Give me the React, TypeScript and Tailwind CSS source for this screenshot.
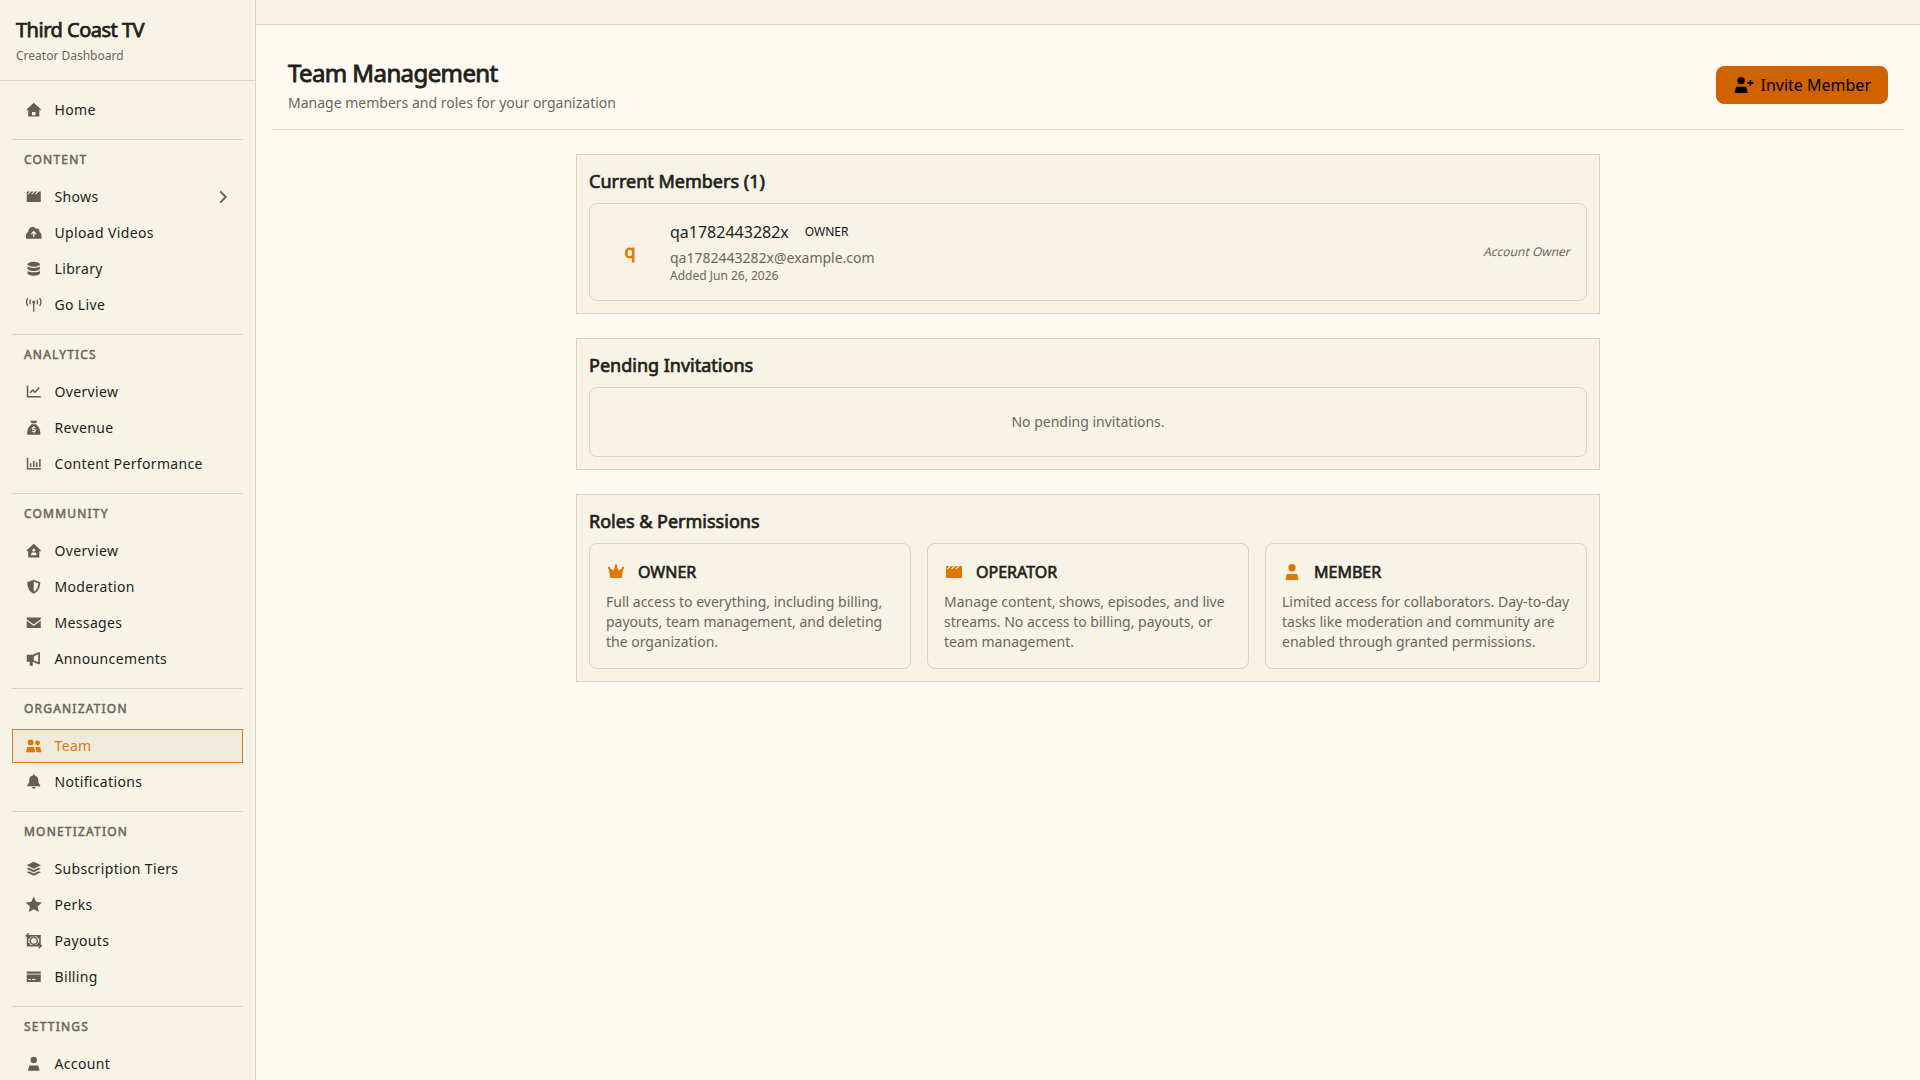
import type { ReactNode } from "react";

const ICONS: Record<string, ReactNode> = {
  home: (
    <path
      fillRule="evenodd"
      d="M9 1.8 1.5 8.7l1 1.1.8-.7V16h11.4V9.1l.8.7 1-1.1zM7.2 11.2h3.6v3.4H7.2z"
    />
  ),
  shows: (
    <path
      fillRule="evenodd"
      d="M1.8 3.6h14.4v10.8H1.8zM5 3.6h1.4L3.7 6.4H2.3zM8.9 3.6h1.4L7.6 6.4H6.2zM12.8 3.6h1.4l-2.7 2.8h-1.4z"
    />
  ),
  upload: (
    <path
      fillRule="evenodd"
      d="M1 15.2v-3.4c0-1.7 1-3.2 2.4-3.9v-.5C3.4 4.9 5.3 3 7.7 3c1.5 0 2.8.7 3.6 1.8 2.2-.4 3.9.9 3.6 3.3 1.4.7 2.1 2.1 2.1 3.7v3.4zM9 6.9 6 9.9l.9.9 1.4-1.4v3.8h1.4V9.4l1.4 1.4.9-.9z"
    />
  ),
  library: (
    <>
      <ellipse cx="9" cy="4.4" rx="6.4" ry="2.5" />
      <path d="M2.6 6.7C4 7.6 6.3 8.1 9 8.1s5-.5 6.4-1.4v2.1c0 1.4-2.9 2.5-6.4 2.5s-6.4-1.1-6.4-2.5zM2.6 11.3c1.4.9 3.7 1.4 6.4 1.4s5-.5 6.4-1.4v2.3c0 1.4-2.9 2.5-6.4 2.5s-6.4-1.1-6.4-2.5z" />
    </>
  ),
  live: (
    <>
      <circle cx="9" cy="6.2" r="1.6" />
      <path d="M8.3 6h1.4v10.2H8.3z" />
      <path
        fill="none"
        stroke="currentColor"
        strokeWidth="1.4"
        d="M3 2.1c-1.7 2.4-1.7 5.8 0 8.2M15 2.1c1.7 2.4 1.7 5.8 0 8.2M5.7 3.7c-.9 1.6-.9 3.4 0 5M12.3 3.7c.9 1.6.9 3.4 0 5"
      />
    </>
  ),
  line: (
    <path
      fill="none"
      stroke="currentColor"
      strokeWidth="1.6"
      d="M2.6 2.8v11.4h13.6M5.2 10.4l2.7-3.1 2.4 2.2 4.4-4.8"
    />
  ),
  revenue: (
    <>
      <path d="M5.3 1.7h7.4l-1.6 2.7H6.9zM6.7 5.4h4.6c2.6 2 4.4 5 4.4 8.2v2.6H2.3v-2.6c0-3.2 1.8-6.2 4.4-8.2z" />
      <path
        fill="none"
        stroke="#f7f3e6"
        strokeWidth="1.2"
        d="M10.8 9.2c-1.3-.6-3.4-.6-3.4.6 0 1.4 3.4.6 3.4 2.1 0 1.2-2.2 1.1-3.6.5M9 7.5v1.4M9 12.6v1.5"
      />
    </>
  ),
  bars: (
    <path
      fill="none"
      stroke="currentColor"
      strokeWidth="1.6"
      d="M2.6 2.8v11.4h13.6M5.8 8.4v3.9M9 5.8v6.5M12 7.4v4.9M15.3 4v8.3"
    />
  ),
  community: (
    <path
      fillRule="evenodd"
      d="M9 1.8 1.5 8.7l1 1.1.8-.7V16h11.4V9.1l.8.7 1-1.1zM9 7a1.5 1.5 0 0 0 0 3 1.5 1.5 0 0 0 0-3zM6.9 10.9h4.2l.9 2.8H6z"
    />
  ),
  shield: (
    <path
      fillRule="evenodd"
      d="m9 1.7 6.7 2.7c0 5.2-1.9 9.4-6.7 11.9-4.8-2.5-6.7-6.7-6.7-11.9zM9 3.7v10.4c3.1-1.9 4.6-4.8 4.8-8.5z"
    />
  ),
  mail: <path d="M1.8 3.6h14.4v1.7L9 10.7 1.8 5.3zM1.8 7 9 12.4 16.2 7v7.4H1.8z" />,
  horn: (
    <path
      fillRule="evenodd"
      d="M1.8 4.9H8l5.6-2.6h1.8v12.4h-1.8L8 12.1v4H4.9v-4H1.8zM9 6.6v3.9l4.6 2.1V4.4z"
    />
  ),
  team: (
    <>
      <circle cx="5.8" cy="5.6" r="3" />
      <circle cx="12.9" cy="6.1" r="2.5" />
      <path d="M2.3 10.2h7l1.2 5.6H1zM10.6 10.2h5l1.4 5.6h-5z" />
    </>
  ),
  bell: (
    <path d="M8.2 1.6h1.6v1c2.3.4 3.9 2.3 3.9 4.6v2.4l2 3.2v.9H2.3v-.9l2-3.2V7.2c0-2.3 1.6-4.2 3.9-4.6zM7.2 14.5h3.6c0 1-.8 1.7-1.8 1.7s-1.8-.7-1.8-1.7z" />
  ),
  layers: (
    <path d="m9 1.9 7.4 3.5L9 8.9 1.6 5.4zM1.6 9l2.2-1.1L9 10.4l5.2-2.5L16.4 9 9 12.5zM1.6 12.6l2.2-1.1L9 14l5.2-2.5 2.2 1.1L9 16.1z" />
  ),
  star: <path d="m9 .6 2.5 5.4 5.8.7-4.3 4 1.1 5.8L9 13.6l-5.1 2.9L5 10.7l-4.3-4L6.5 6z" />,
  payouts: (
    <>
      <path fill="none" stroke="currentColor" strokeWidth="1.6" d="M1.5 3.9h13.9v8.4M16.5 14.1H2.6V5.7" />
      <path fill="none" stroke="currentColor" strokeWidth="1.4" d="M3.8 1.3 1.3 3.9l2.5 2.6M14.2 11.5l2.5 2.6-2.5 2.6" />
      <circle cx="9" cy="9" r="3.7" fill="none" stroke="currentColor" strokeWidth="1.5" />
      <path d="M2.6 4h4.2L3.6 7.6h-1zM15.4 14h-4.2l3.2-3.6h1zM11.8 4h3.6v2.8h-1.8zM6.2 14H2.6v-2.8h1.8z" />
    </>
  ),
  card: (
    <>
      <path opacity=".45" d="M1.8 5.2h14.4v2.2H1.8z" />
      <path
        fillRule="evenodd"
        d="M1.8 3.6h14.4v2H1.8zM1.8 7.2h14.4v7.2H1.8zM3.6 11.2v1.2h2.6v-1.2zM7.3 11.2v1.2h3.4v-1.2z"
      />
    </>
  ),
  user: (
    <>
      <circle cx="9" cy="5.2" r="3.3" />
      <path d="M4.3 10.7h9.4l1.2 5.5H3.1z" />
    </>
  ),
  invite: (
    <>
      <circle cx="7.3" cy="5.1" r="3.3" />
      <path d="M2.7 10.6h9.2l1.3 5.5H1.4zM14.9 4.4h1.4v2h2v1.4h-2v2h-1.4v-2h-2V6.4h2z" />
    </>
  ),
  crown: (
    <path d="M9 2.3a1.2 1.2 0 0 1 .7 2.2l1.9 3.1 2.7-1.9a1.1 1.1 0 1 1 1.2.7L14.2 14.4H3.8L2.5 6.4a1.1 1.1 0 1 1 1.2-.7l2.7 1.9 1.9-3.1A1.2 1.2 0 0 1 9 2.3z" />
  ),
};

function Icon({ name, className }: { name: string; className: string }) {
  return (
    <svg viewBox="0 0 18 18" fill="currentColor" className={`shrink-0 overflow-visible ${className}`}>
      {ICONS[name]}
    </svg>
  );
}

const SECTIONS = [
  {
    title: "CONTENT",
    items: [
      { label: "Shows", icon: "shows", expandable: true },
      { label: "Upload Videos", icon: "upload" },
      { label: "Library", icon: "library" },
      { label: "Go Live", icon: "live" },
    ],
  },
  {
    title: "ANALYTICS",
    items: [
      { label: "Overview", icon: "line" },
      { label: "Revenue", icon: "revenue" },
      { label: "Content Performance", icon: "bars" },
    ],
  },
  {
    title: "COMMUNITY",
    items: [
      { label: "Overview", icon: "community" },
      { label: "Moderation", icon: "shield" },
      { label: "Messages", icon: "mail" },
      { label: "Announcements", icon: "horn" },
    ],
  },
  {
    title: "ORGANIZATION",
    items: [
      { label: "Team", icon: "team", active: true },
      { label: "Notifications", icon: "bell" },
    ],
  },
  {
    title: "MONETIZATION",
    items: [
      { label: "Subscription Tiers", icon: "layers" },
      { label: "Perks", icon: "star" },
      { label: "Payouts", icon: "payouts" },
      { label: "Billing", icon: "card" },
    ],
  },
  { title: "SETTINGS", items: [{ label: "Account", icon: "user" }] },
];

const ROLES = [
  {
    name: "OWNER",
    icon: "crown",
    text: "Full access to everything, including billing, payouts, team management, and deleting the organization.",
  },
  {
    name: "OPERATOR",
    icon: "shows",
    text: "Manage content, shows, episodes, and live streams. No access to billing, payouts, or team management.",
  },
  {
    name: "MEMBER",
    icon: "user",
    text: "Limited access for collaborators. Day-to-day tasks like moderation and community are enabled through granted permissions.",
  },
];

type Item = { label: string; icon: string; active?: boolean; expandable?: boolean };

function NavItem({ item }: { item: Item }) {
  return (
    <a
      className={`flex h-[34px] items-center gap-3 border px-3 text-sm tracking-[0.025em] ${
        item.active ? "border-[#cf851c] bg-[#f0eadc] text-[#e07a10]" : "border-transparent text-[#231f1a]"
      }`}
    >
      <Icon name={item.icon} className={`size-[17.5px] ${item.active ? "text-[#e07800]" : "text-[#635e50]"}`} />
      <span className="flex-1">{item.label}</span>
      {item.expandable && (
        <svg viewBox="0 0 14 14" className="size-3.5 text-[#635e50]" fill="none" stroke="currentColor" strokeWidth="1.8">
          <path d="m4.2 1.4 5.6 5.6-5.6 5.6" />
        </svg>
      )}
    </a>
  );
}

function Panel({ title, children }: { title: string; children: ReactNode }) {
  return (
    <section className="border border-[#d9d4c1] bg-[#f7f3e6] p-3">
      <h2 className="mb-2 text-lg leading-7 [-webkit-text-stroke:0.7px]">{title}</h2>
      {children}
    </section>
  );
}

export default function App() {
  return (
    <div className="flex h-[1080px] w-full overflow-hidden bg-[#fffaf1] font-['Noto_Sans',sans-serif] text-[#231f1a]">
      {/* Sidebar */}
      <aside className="w-64 shrink-0 overflow-hidden border-r border-[#d9d4c1] bg-[#f7f3e6]">
        <div className="border-b border-[#d9d4c1] p-4">
          <div className="text-xl leading-7 tracking-[-0.025em] [-webkit-text-stroke:0.75px]">Third Coast TV</div>
          <div className="mt-1 text-xs text-[#6b675c]">Creator Dashboard</div>
        </div>
        <nav className="p-3">
          <NavItem item={{ label: "Home", icon: "home" }} />
          {SECTIONS.map((section) => (
            <div key={section.title} className="mt-3 border-t border-[#d9d4c1] pt-3">
              <div className="mb-3 px-3 text-xs tracking-[0.1em] text-[#6b675c] [-webkit-text-stroke:0.5px]">
                {section.title}
              </div>
              <div className="flex flex-col gap-0.5">
                {section.items.map((item) => (
                  <NavItem key={item.label} item={item} />
                ))}
              </div>
            </div>
          ))}
        </nav>
      </aside>

      <div className="min-w-0 flex-1">
        <div className="h-[25px] border-b border-[#d9d4c1] bg-[#f7f3e6]" />
        <main className="p-4">
          {/* Page header */}
          <header className="flex items-center justify-between border-b border-[#d9d4c1] p-4">
            <div>
              <h1 className="text-2xl tracking-[-0.025em] [-webkit-text-stroke:0.85px]">Team Management</h1>
              <p className="mt-1 text-sm text-[#6b675c]">Manage members and roles for your organization</p>
            </div>
            <button className="flex h-[38px] items-center gap-2 rounded-lg border border-[#d06200] bg-[#d06200] px-4 text-base text-black">
              <Icon name="invite" className="size-5" />
              Invite Member
            </button>
          </header>

          <div className="mx-auto mt-6 flex max-w-5xl flex-col gap-6">
            <Panel title="Current Members (1)">
              <div className="flex items-center gap-4 rounded-lg border border-[#d9d4c1] p-4">
                <div className="flex size-12 items-center justify-center pb-0.5 text-lg leading-7 text-[#e07800] [-webkit-text-stroke:0.8px]">
                  q
                </div>
                <div className="flex-1">
                  <div className="flex items-center gap-2">
                    <span>qa1782443282x</span>
                    <span className="px-2 text-xs text-[#111]">OWNER</span>
                  </div>
                  <div className="mt-1 text-sm text-[#6b675c]">qa1782443282x@example.com</div>
                  <div className="text-xs text-[#6b675c]">Added Jun 26, 2026</div>
                </div>
                <span className="inline-block origin-[50%_12.6px] -skew-x-[14deg] text-xs text-[#6b675c]">
                  Account Owner
                </span>
              </div>
            </Panel>

            <Panel title="Pending Invitations">
              <div className="rounded-lg border border-[#d9d4c1] p-6 text-center text-sm text-[#6b675c]">
                No pending invitations.
              </div>
            </Panel>

            <Panel title="Roles & Permissions">
              <div className="grid grid-cols-3 gap-4">
                {ROLES.map((role) => (
                  <div key={role.name} className="rounded-lg border border-[#d9d4c1] p-4">
                    <div className="mb-2 flex items-center gap-3">
                      <Icon name={role.icon} className="size-5 text-[#e07800]" />
                      <h3 className="[-webkit-text-stroke:0.65px]">{role.name}</h3>
                    </div>
                    <p className="text-sm text-[#6b675c]">{role.text}</p>
                  </div>
                ))}
              </div>
            </Panel>
          </div>
        </main>
      </div>
    </div>
  );
}
